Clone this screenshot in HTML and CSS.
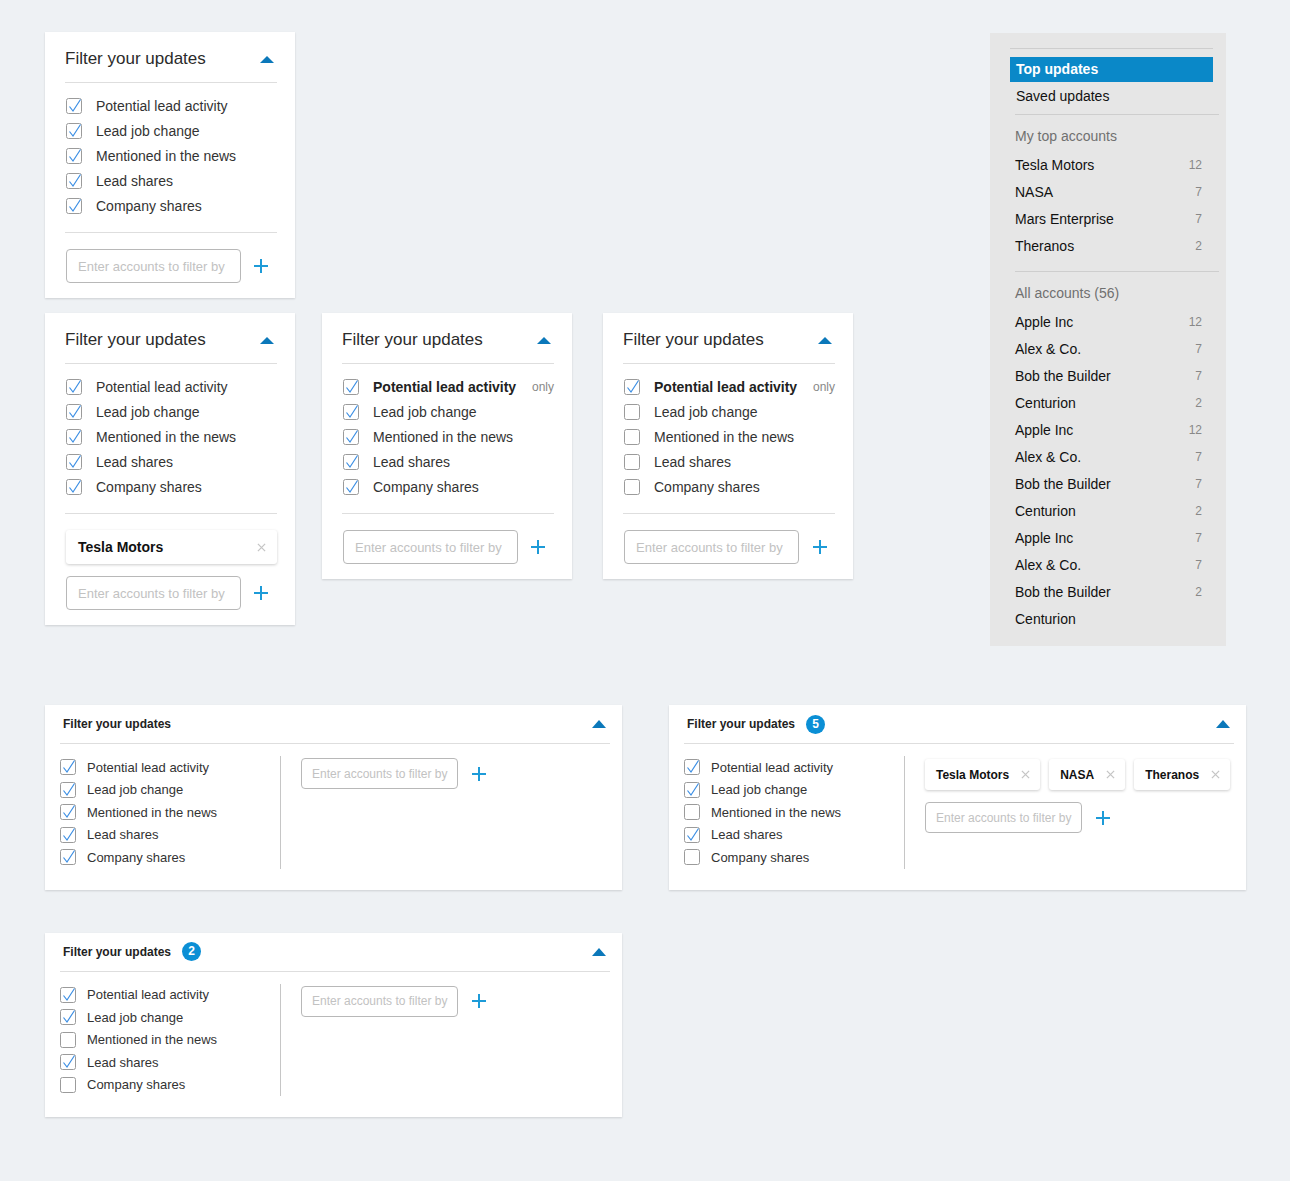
FILE: index.html
```html
<!DOCTYPE html>
<html lang="en">
<head>
    <meta charset="UTF-8">
    <meta name="viewport" content="width=device-width, initial-scale=1.0">
    <title>Filter your updates</title>
    <link rel="stylesheet" href="styles.css">
</head>
<body>
    <div class="page">
        <div class="top">
            <div class="cards">
                <!-- all checked -->
                <section class="card">
                    <div class="card-head">
                        <h2>Filter your updates</h2>
                        <span class="caret"></span>
                    </div>
                    <ul class="filters">
                        <li><svg class="cb" viewBox="0 0 16 16"><rect x=".5" y=".5" width="15" height="15" rx="2"/><path d="M3.5 8.5l3.5 4.5 7.5-11.5"/></svg>Potential lead activity</li>
                        <li><svg class="cb" viewBox="0 0 16 16"><rect x=".5" y=".5" width="15" height="15" rx="2"/><path d="M3.5 8.5l3.5 4.5 7.5-11.5"/></svg>Lead job change</li>
                        <li><svg class="cb" viewBox="0 0 16 16"><rect x=".5" y=".5" width="15" height="15" rx="2"/><path d="M3.5 8.5l3.5 4.5 7.5-11.5"/></svg>Mentioned in the news</li>
                        <li><svg class="cb" viewBox="0 0 16 16"><rect x=".5" y=".5" width="15" height="15" rx="2"/><path d="M3.5 8.5l3.5 4.5 7.5-11.5"/></svg>Lead shares</li>
                        <li><svg class="cb" viewBox="0 0 16 16"><rect x=".5" y=".5" width="15" height="15" rx="2"/><path d="M3.5 8.5l3.5 4.5 7.5-11.5"/></svg>Company shares</li>
                    </ul>
                    <div class="card-foot">
                        <div class="add-row">
                            <input type="text" class="account-input" placeholder="Enter accounts to filter by">
                            <span class="plus"></span>
                        </div>
                    </div>
                </section>

                <div class="card-row">
                    <!-- with a selected account -->
                    <section class="card">
                        <div class="card-head">
                            <h2>Filter your updates</h2>
                            <span class="caret"></span>
                        </div>
                        <ul class="filters">
                            <li><svg class="cb" viewBox="0 0 16 16"><rect x=".5" y=".5" width="15" height="15" rx="2"/><path d="M3.5 8.5l3.5 4.5 7.5-11.5"/></svg>Potential lead activity</li>
                            <li><svg class="cb" viewBox="0 0 16 16"><rect x=".5" y=".5" width="15" height="15" rx="2"/><path d="M3.5 8.5l3.5 4.5 7.5-11.5"/></svg>Lead job change</li>
                            <li><svg class="cb" viewBox="0 0 16 16"><rect x=".5" y=".5" width="15" height="15" rx="2"/><path d="M3.5 8.5l3.5 4.5 7.5-11.5"/></svg>Mentioned in the news</li>
                            <li><svg class="cb" viewBox="0 0 16 16"><rect x=".5" y=".5" width="15" height="15" rx="2"/><path d="M3.5 8.5l3.5 4.5 7.5-11.5"/></svg>Lead shares</li>
                            <li><svg class="cb" viewBox="0 0 16 16"><rect x=".5" y=".5" width="15" height="15" rx="2"/><path d="M3.5 8.5l3.5 4.5 7.5-11.5"/></svg>Company shares</li>
                        </ul>
                        <div class="card-foot">
                            <div class="tag tag-full">Tesla Motors<svg class="x" viewBox="0 0 10 10"><path d="M1 1l8 8M9 1l-8 8"/></svg></div>
                            <div class="add-row">
                                <input type="text" class="account-input" placeholder="Enter accounts to filter by">
                                <span class="plus"></span>
                            </div>
                        </div>
                    </section>

                    <!-- hover on first row -->
                    <section class="card">
                        <div class="card-head">
                            <h2>Filter your updates</h2>
                            <span class="caret"></span>
                        </div>
                        <ul class="filters">
                            <li class="hover"><svg class="cb" viewBox="0 0 16 16"><rect x=".5" y=".5" width="15" height="15" rx="2"/><path d="M3.5 8.5l3.5 4.5 7.5-11.5"/></svg>Potential lead activity<span class="only">only</span></li>
                            <li><svg class="cb" viewBox="0 0 16 16"><rect x=".5" y=".5" width="15" height="15" rx="2"/><path d="M3.5 8.5l3.5 4.5 7.5-11.5"/></svg>Lead job change</li>
                            <li><svg class="cb" viewBox="0 0 16 16"><rect x=".5" y=".5" width="15" height="15" rx="2"/><path d="M3.5 8.5l3.5 4.5 7.5-11.5"/></svg>Mentioned in the news</li>
                            <li><svg class="cb" viewBox="0 0 16 16"><rect x=".5" y=".5" width="15" height="15" rx="2"/><path d="M3.5 8.5l3.5 4.5 7.5-11.5"/></svg>Lead shares</li>
                            <li><svg class="cb" viewBox="0 0 16 16"><rect x=".5" y=".5" width="15" height="15" rx="2"/><path d="M3.5 8.5l3.5 4.5 7.5-11.5"/></svg>Company shares</li>
                        </ul>
                        <div class="card-foot">
                            <div class="add-row">
                                <input type="text" class="account-input" placeholder="Enter accounts to filter by">
                                <span class="plus"></span>
                            </div>
                        </div>
                    </section>

                    <!-- after clicking only -->
                    <section class="card">
                        <div class="card-head">
                            <h2>Filter your updates</h2>
                            <span class="caret"></span>
                        </div>
                        <ul class="filters">
                            <li class="hover"><svg class="cb" viewBox="0 0 16 16"><rect x=".5" y=".5" width="15" height="15" rx="2"/><path d="M3.5 8.5l3.5 4.5 7.5-11.5"/></svg>Potential lead activity<span class="only">only</span></li>
                            <li><svg class="cb" viewBox="0 0 16 16"><rect x=".5" y=".5" width="15" height="15" rx="2"/></svg>Lead job change</li>
                            <li><svg class="cb" viewBox="0 0 16 16"><rect x=".5" y=".5" width="15" height="15" rx="2"/></svg>Mentioned in the news</li>
                            <li><svg class="cb" viewBox="0 0 16 16"><rect x=".5" y=".5" width="15" height="15" rx="2"/></svg>Lead shares</li>
                            <li><svg class="cb" viewBox="0 0 16 16"><rect x=".5" y=".5" width="15" height="15" rx="2"/></svg>Company shares</li>
                        </ul>
                        <div class="card-foot">
                            <div class="add-row">
                                <input type="text" class="account-input" placeholder="Enter accounts to filter by">
                                <span class="plus plus-wide"></span>
                            </div>
                        </div>
                    </section>
                </div>
            </div>

            <aside class="sidebar">
                <nav class="side-nav">
                    <a class="active">Top updates</a>
                    <a>Saved updates</a>
                </nav>
                <div class="side-group">
                    <div class="side-head">My top accounts</div>
                    <ul class="accounts">
                        <li>Tesla Motors<span>12</span></li>
                        <li>NASA<span>7</span></li>
                        <li>Mars Enterprise<span>7</span></li>
                        <li>Theranos<span>2</span></li>
                    </ul>
                </div>
                <div class="side-group">
                    <div class="side-head">All accounts (56)</div>
                    <ul class="accounts">
                        <li>Apple Inc<span>12</span></li>
                        <li>Alex &amp; Co.<span>7</span></li>
                        <li>Bob the Builder<span>7</span></li>
                        <li>Centurion<span>2</span></li>
                        <li>Apple Inc<span>12</span></li>
                        <li>Alex &amp; Co.<span>7</span></li>
                        <li>Bob the Builder<span>7</span></li>
                        <li>Centurion<span>2</span></li>
                        <li>Apple Inc<span>7</span></li>
                        <li>Alex &amp; Co.<span>7</span></li>
                        <li>Bob the Builder<span>2</span></li>
                        <li>Centurion</li>
                    </ul>
                </div>
            </aside>
        </div>

        <div class="wide-grid">
            <section class="card wide">
                <div class="wide-head">
                    <h3>Filter your updates</h3>
                    <span class="caret"></span>
                </div>
                <div class="wide-body">
                    <ul class="filters small">
                        <li><svg class="cb" viewBox="0 0 16 16"><rect x=".5" y=".5" width="15" height="15" rx="2"/><path d="M3.5 8.5l3.5 4.5 7.5-11.5"/></svg>Potential lead activity</li>
                        <li><svg class="cb" viewBox="0 0 16 16"><rect x=".5" y=".5" width="15" height="15" rx="2"/><path d="M3.5 8.5l3.5 4.5 7.5-11.5"/></svg>Lead job change</li>
                        <li><svg class="cb" viewBox="0 0 16 16"><rect x=".5" y=".5" width="15" height="15" rx="2"/><path d="M3.5 8.5l3.5 4.5 7.5-11.5"/></svg>Mentioned in the news</li>
                        <li><svg class="cb" viewBox="0 0 16 16"><rect x=".5" y=".5" width="15" height="15" rx="2"/><path d="M3.5 8.5l3.5 4.5 7.5-11.5"/></svg>Lead shares</li>
                        <li><svg class="cb" viewBox="0 0 16 16"><rect x=".5" y=".5" width="15" height="15" rx="2"/><path d="M3.5 8.5l3.5 4.5 7.5-11.5"/></svg>Company shares</li>
                    </ul>
                    <div class="wide-side">
                        <div class="add-row">
                            <input type="text" class="account-input small" placeholder="Enter accounts to filter by">
                            <span class="plus plus-wide"></span>
                        </div>
                    </div>
                </div>
            </section>

            <section class="card wide">
                <div class="wide-head">
                    <h3>Filter your updates</h3>
                    <span class="badge">5</span>
                    <span class="caret"></span>
                </div>
                <div class="wide-body">
                    <ul class="filters small">
                        <li><svg class="cb" viewBox="0 0 16 16"><rect x=".5" y=".5" width="15" height="15" rx="2"/><path d="M3.5 8.5l3.5 4.5 7.5-11.5"/></svg>Potential lead activity</li>
                        <li><svg class="cb" viewBox="0 0 16 16"><rect x=".5" y=".5" width="15" height="15" rx="2"/><path d="M3.5 8.5l3.5 4.5 7.5-11.5"/></svg>Lead job change</li>
                        <li><svg class="cb" viewBox="0 0 16 16"><rect x=".5" y=".5" width="15" height="15" rx="2"/></svg>Mentioned in the news</li>
                        <li><svg class="cb" viewBox="0 0 16 16"><rect x=".5" y=".5" width="15" height="15" rx="2"/><path d="M3.5 8.5l3.5 4.5 7.5-11.5"/></svg>Lead shares</li>
                        <li><svg class="cb" viewBox="0 0 16 16"><rect x=".5" y=".5" width="15" height="15" rx="2"/></svg>Company shares</li>
                    </ul>
                    <div class="wide-side">
                        <div class="tags">
                            <div class="tag">Tesla Motors<svg class="x" viewBox="0 0 10 10"><path d="M1 1l8 8M9 1l-8 8"/></svg></div>
                            <div class="tag">NASA<svg class="x" viewBox="0 0 10 10"><path d="M1 1l8 8M9 1l-8 8"/></svg></div>
                            <div class="tag">Theranos<svg class="x" viewBox="0 0 10 10"><path d="M1 1l8 8M9 1l-8 8"/></svg></div>
                        </div>
                        <div class="add-row">
                            <input type="text" class="account-input small" placeholder="Enter accounts to filter by">
                            <span class="plus plus-wide"></span>
                        </div>
                    </div>
                </div>
            </section>

            <section class="card wide">
                <div class="wide-head">
                    <h3>Filter your updates</h3>
                    <span class="badge">2</span>
                    <span class="caret"></span>
                </div>
                <div class="wide-body">
                    <ul class="filters small">
                        <li><svg class="cb" viewBox="0 0 16 16"><rect x=".5" y=".5" width="15" height="15" rx="2"/><path d="M3.5 8.5l3.5 4.5 7.5-11.5"/></svg>Potential lead activity</li>
                        <li><svg class="cb" viewBox="0 0 16 16"><rect x=".5" y=".5" width="15" height="15" rx="2"/><path d="M3.5 8.5l3.5 4.5 7.5-11.5"/></svg>Lead job change</li>
                        <li><svg class="cb" viewBox="0 0 16 16"><rect x=".5" y=".5" width="15" height="15" rx="2"/></svg>Mentioned in the news</li>
                        <li><svg class="cb" viewBox="0 0 16 16"><rect x=".5" y=".5" width="15" height="15" rx="2"/><path d="M3.5 8.5l3.5 4.5 7.5-11.5"/></svg>Lead shares</li>
                        <li><svg class="cb" viewBox="0 0 16 16"><rect x=".5" y=".5" width="15" height="15" rx="2"/></svg>Company shares</li>
                    </ul>
                    <div class="wide-side">
                        <div class="add-row">
                            <input type="text" class="account-input small" placeholder="Enter accounts to filter by">
                            <span class="plus plus-wide"></span>
                        </div>
                    </div>
                </div>
            </section>
        </div>
    </div>
</body>
</html>
```

FILE: styles.css
```css
body {
    font-family: "Liberation Sans", Arial, sans-serif;
    margin: 0;
    background-color: #eef1f4;
    color: #333;
}
ul {
    list-style: none;
    margin: 0;
    padding: 0;
}
.page {
    padding: 32px 0 60px 45px;
}
.top {
    display: flex;
    align-items: flex-start;
}
.cards {
    display: flex;
    flex-direction: column;
    gap: 15px;
}
.card-row {
    display: flex;
    align-items: flex-start;
    gap: 27px;
}
.card-row > .card:last-child {
    margin-left: 4px;
}
.card {
    width: 250px;
    box-sizing: border-box;
    background: #fff;
    padding: 0 18px 0 20px;
    box-shadow: 0 1px 2px rgba(0, 0, 0, 0.14);
}
.card-head {
    display: flex;
    align-items: center;
    justify-content: space-between;
    padding: 16px 3px 12px 0;
    border-bottom: 1px solid #dedede;
}
.card-head h2 {
    margin: 0;
    font-size: 17px;
    font-weight: normal;
    line-height: 22px;
    color: #2b2b2b;
}
.caret {
    width: 0;
    height: 0;
    border-left: 7px solid transparent;
    border-right: 7px solid transparent;
    border-bottom: 7px solid #0b78ba;
}
.filters {
    padding: 10px 0 14px;
    border-bottom: 1px solid #dedede;
}
.filters li {
    display: flex;
    align-items: center;
    height: 25px;
    font-size: 14px;
    color: #333;
    padding-left: 1px;
}
.filters li.hover {
    font-weight: bold;
    color: #222;
}
.only {
    margin-left: auto;
    font-size: 12px;
    font-weight: normal;
    color: #888;
}
.cb {
    width: 16px;
    height: 16px;
    flex: none;
    margin-right: 14px;
}
.cb rect {
    fill: #fff;
    stroke: #9b9b9b;
}
.cb path {
    fill: none;
    stroke: #3d8fe4;
    stroke-width: 1.2;
}
.card-foot {
    display: flex;
    flex-direction: column;
    gap: 12px;
    padding: 16px 0 15px;
}
.add-row {
    display: flex;
    align-items: center;
}
.account-input {
    width: 175px;
    height: 34px;
    box-sizing: border-box;
    border: 1px solid #b8b8b8;
    border-radius: 4px;
    padding: 0 11px;
    font-family: inherit;
    font-size: 13px;
    margin-left: 1px;
}
.account-input::placeholder {
    color: #c2c2c2;
}
.account-input.small {
    width: 157px;
    height: 31px;
    padding: 0 6px 0 10px;
    font-size: 12px;
    margin-left: 0;
}
.plus {
    position: relative;
    width: 14px;
    height: 14px;
    margin-left: 13px;
}
.plus-wide {
    margin-left: 14px;
}
.plus::before,
.plus::after {
    content: "";
    position: absolute;
    background: #1d9bd8;
}
.plus::before {
    left: 0;
    top: 6px;
    width: 14px;
    height: 2px;
}
.plus::after {
    left: 6px;
    top: 0;
    width: 2px;
    height: 14px;
}
.tag {
    display: flex;
    align-items: center;
    height: 31px;
    padding: 0 10px 0 11px;
    background: #fff;
    border-radius: 3px;
    box-shadow: 0 1px 3px rgba(0, 0, 0, 0.2);
    font-size: 12px;
    font-weight: bold;
    color: #111;
}
.tag-full {
    height: 34px;
    font-size: 14px;
    justify-content: space-between;
    padding: 0 11px 0 12px;
    margin-left: 1px;
}
.x {
    width: 9px;
    height: 9px;
    margin-left: 12px;
}
.x path {
    stroke: #c5c5c5;
    stroke-width: 1.4;
}

/* sidebar */
.sidebar {
    width: 236px;
    box-sizing: border-box;
    margin: 1px 0 0 137px;
    padding: 15px 7px 14px 20px;
    background: #e6e6e6;
}
.side-nav {
    margin-right: 6px;
    border-top: 1px solid #cecece;
    padding-top: 8px;
}
.side-nav a {
    display: block;
    height: 25px;
    line-height: 25px;
    padding-left: 6px;
    font-size: 14px;
    color: #111;
}
.side-nav a + a {
    margin-top: 2px;
}
.side-nav a.active {
    background: #0a88c8;
    color: #fff;
    font-weight: bold;
}
.side-group {
    margin: 5px 0 0 5px;
    padding-top: 8px;
    border-top: 1px solid #cecece;
}
.side-group + .side-group {
    margin-top: 12px;
}
.side-head {
    line-height: 26px;
    margin-bottom: 2px;
    font-size: 14px;
    color: #707070;
}
.accounts li {
    display: flex;
    justify-content: space-between;
    align-items: center;
    height: 27px;
    padding-right: 17px;
    font-size: 14px;
    color: #111;
}
.accounts li span {
    font-size: 12px;
    color: #888;
}

/* wide layout */
.wide-grid {
    display: grid;
    grid-template-columns: 577px 577px;
    column-gap: 47px;
    row-gap: 43px;
    margin-top: 59px;
}
.card.wide {
    width: 577px;
    padding: 0 12px 0 15px;
}
.wide-head {
    display: flex;
    align-items: center;
    height: 38px;
    padding: 0 4px 0 3px;
    border-bottom: 1px solid #dedede;
}
.wide-head h3 {
    margin: 0;
    font-size: 12px;
    font-weight: bold;
    color: #222;
}
.wide-head .caret {
    margin-left: auto;
    border-left-width: 7.5px;
    border-right-width: 7.5px;
    border-bottom-width: 8px;
}
.badge {
    width: 19px;
    height: 19px;
    margin-left: 11px;
    border-radius: 50%;
    background: #0b8fd5;
    color: #fff;
    font-size: 12px;
    font-weight: bold;
    line-height: 19px;
    text-align: center;
}
.wide-body {
    display: flex;
    align-items: flex-start;
    padding: 12px 0 21px;
}
.filters.small {
    width: 220px;
    padding: 0;
    border-bottom: none;
    border-right: 1px solid #c6c6c6;
}
.filters.small li {
    height: 22.5px;
    font-size: 13px;
    padding-left: 0;
}
.filters.small .cb {
    margin-right: 11px;
}
.wide-side {
    display: flex;
    flex-direction: column;
    gap: 12px;
    padding: 2px 0 0 20px;
}
.tags {
    display: flex;
    gap: 9px;
    padding-top: 1px;
}
```
